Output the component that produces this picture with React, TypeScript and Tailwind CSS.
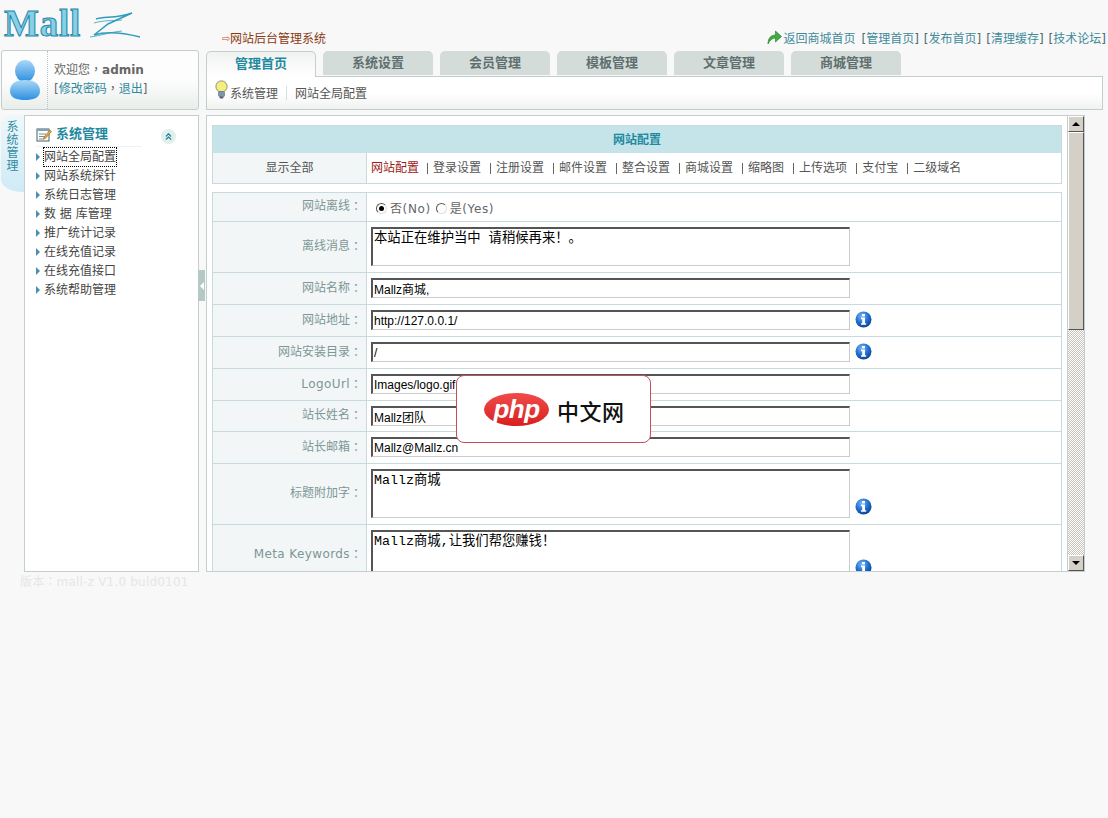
import { ChevronsUp } from 'lucide-react'

const cjk = 'font-["DejaVu_Sans","Noto_Sans_CJK_SC",sans-serif]'

const tabs = ['管理首页', '系统设置', '会员管理', '模板管理', '文章管理', '商城管理']
const menu = ['网站全局配置', '网站系统探针', '系统日志管理', '数 据 库管理', '推广统计记录', '在线充值记录', '在线充值接口', '系统帮助管理']
const sections = ['网站配置', '登录设置', '注册设置', '邮件设置', '整合设置', '商城设置', '缩略图', '上传选项', '支付宝', '二级域名']
const topLinks = ['管理首页', '发布首页', '清理缓存', '技术论坛']

// the TC face centres its punctuation, like the reference
function P({ c }: { c: string }) {
  return <span className="font-['Noto_Sans_CJK_TC',sans-serif] leading-none">{c}</span>
}

function InfoIcon() {
  return (
    <svg width="17" height="17" viewBox="0 0 17 17" className="shrink-0">
      <defs>
        <radialGradient id="inf" cx="40%" cy="30%" r="75%">
          <stop offset="0" stopColor="#7db8f0" />
          <stop offset="0.55" stopColor="#1f6fd0" />
          <stop offset="1" stopColor="#0b3f8c" />
        </radialGradient>
      </defs>
      <circle cx="8.5" cy="8.5" r="8" fill="url(#inf)" />
      <rect x="7" y="3" width="3" height="2.4" fill="#fff" />
      <path d="M6 6.6h4v5.6h1.2v1.6H6v-1.6h1.2V8.2H6z" fill="#fff" />
    </svg>
  )
}

function Bulb() {
  return (
    <svg width="13" height="20" viewBox="0 0 13 20">
      <circle cx="6.5" cy="6.5" r="5.6" fill="#f6ee7a" stroke="#8a8f7a" strokeWidth="1" />
      <rect x="3.5" y="11.5" width="6" height="5" rx="1" fill="#7c94b0" stroke="#58677a" strokeWidth="0.6" />
      <rect x="4.5" y="16.5" width="4" height="2" rx="1" fill="#56616e" />
    </svg>
  )
}

function Row({ label, h, latin, children }: { label: string; h: string; latin?: boolean; children: React.ReactNode }) {
  return (
    <div className={`flex shrink-0 border-b border-[#c8d9e0] ${h}`}>
      <div className="flex w-[154px] shrink-0 items-center justify-end border-r border-[#c8d9e0] bg-[#f2f6f6] pr-[4px] pb-[2px] text-[12px] text-[#7d9797]">
        <span className={latin ? 'tracking-[0.4px]' : ''}>{label}</span>
        <P c="：" />
      </div>
      <div className="flex min-w-0 flex-1 items-center bg-white pl-[4px]">{children}</div>
    </div>
  )
}

function Field({ value, info }: { value: string; info?: boolean }) {
  return (
    <>
      <input
        readOnly
        value={value}
        className="mb-[1px] h-[20px] w-[479px] border-t-2 border-r border-b border-l-2 border-t-[#555] border-r-[#ccc] border-b-[#ccc] border-l-[#555] bg-white px-[1px] font-['Liberation_Sans','Noto_Sans_CJK_SC',sans-serif] text-[12px] text-black outline-none"
      />
      {info && <span className="mb-[2px] ml-[5px]"><InfoIcon /></span>}
    </>
  )
}

function Area({ value, h }: { value: string; h: string }) {
  return (
    <textarea
      readOnly
      value={value}
      className={`${h} mb-[1px] w-[479px] resize-none overflow-hidden border-t-2 border-r border-b border-l-2 border-t-[#555] border-r-[#ccc] border-b-[#ccc] border-l-[#555] bg-white pt-[2px] pl-[1px] font-['Liberation_Mono','Noto_Sans_CJK_SC',monospace] text-[13.33px] leading-[15px] text-black outline-none`}
    />
  )
}

export default function App() {
  return (
    <div className={`relative h-[818px] w-[1108px] overflow-hidden bg-[#f8f8f8] text-[12px] ${cjk}`}>
      <header className="relative flex h-[50px] items-end">
        <div className="relative mb-[11px] ml-[4px] h-[31px] w-[218px]">
          <span className="font-['Liberation_Serif',serif] text-[37px] leading-[31px] font-bold tracking-[0.8px] text-[#86cfe6] [-webkit-text-stroke:1px_#1f86a8]">
            Mall
          </span>
          <svg width="56" height="30" viewBox="0 0 56 30" className="absolute top-[2px] left-[82px]" fill="none" stroke="#2f9dbd">
            <path d="M10 9 C18 6 30 9 46 3 L22 14 L8 25 C24 20 42 24 54 27" strokeWidth="1.5" />
            <path d="M4 27 C14 26 24 22 36 21" strokeWidth="0.8" />
            <path d="M8 13 C18 10 26 11 36 10" strokeWidth="0.8" />
          </svg>
        </div>
        <span className="mb-[2px] flex items-center text-[#8a3a12]">
          <span className="w-[8px] text-[10px] leading-none text-[#c7501a]">⇨</span>网站后台管理系统
        </span>
        <div className="mb-[2px] ml-auto flex items-center pr-[2px] text-[#3f8a9a]">
          <svg width="15" height="15" viewBox="0 0 15 15" className="mr-[1px] mb-[3px]">
            <path d="M1 14 C1 8 4 5 8.500 5 V1 L14.500 6.500 L8.500 12 V8 C5.500 8 3 10 1 14Z" fill="#3fae3f" stroke="#1f7a2f" strokeWidth="0.6" />
          </svg>
          <span className="mr-[1px]">返回商城首页</span>
          {topLinks.map((t) => (
            <span key={t} className="ml-[5px] text-[#4a6a70]">
              [<span className="text-[#3f8a9a]">{t}</span>]
            </span>
          ))}
        </div>
      </header>

      <div className="flex gap-[7px] pl-[1px]">
        <aside className="w-[198px] shrink-0">
          <div className="flex h-[60px] rounded-[3px] border border-[#c3cfcf] bg-gradient-to-b from-[#fdfdfd] from-50% to-[#e9eeea]">
            <div className="flex w-[46px] shrink-0 items-center justify-center border-r border-dotted border-[#b8c4c4]">
              <svg width="32" height="42" viewBox="0 0 32 42">
                <defs>
                  <linearGradient id="usr" x1="0" y1="0" x2="0" y2="1">
                    <stop offset="0" stopColor="#a9d8f8" />
                    <stop offset="1" stopColor="#2d8fe0" />
                  </linearGradient>
                </defs>
                <ellipse cx="16" cy="12" rx="10" ry="11" fill="url(#usr)" />
                <path d="M1 32 C1 24 8 21 16 21 C24 21 31 24 31 32 C31 39 24 41 16 41 C8 41 1 39 1 32Z" fill="url(#usr)" />
              </svg>
            </div>
            <div className="pt-[10px] pl-[6px] leading-[19px] text-[#666]">
              <div>欢迎您<P c="，" /><b className="text-[#666]">admin</b></div>
              <div>[<span className="text-[#2f8a9f]">修改密码</span><P c="，" /><span className="text-[#2f8a9f]">退出</span>]</div>
            </div>
          </div>

          <div className="relative mt-[5px] flex h-[457px]">
            <div className="h-[77px] w-[23px] shrink-0 rounded-tl-[8px] rounded-bl-[22px_12px] bg-gradient-to-b from-[#eef8fb] to-[#cfeaf6] pt-[6px] text-center text-[12px] leading-[13px] text-[#2f8a9f]">
              <div className="mx-auto w-[12px]">系统管理</div>
            </div>
            <div className="flex-1 border border-[#c3cfcf] bg-white pl-[11px]">
              <div className="relative flex h-[31px] w-[106px] items-center border-b border-[#eef2f2] pt-[5px]">
                <svg width="16" height="16" viewBox="0 0 16 16" className="shrink-0">
                  <rect x="1" y="3" width="12" height="12" fill="#fff" stroke="#44606a" />
                  <path d="M1 3h12v2H1z" fill="#7fa4b4" />
                  <path d="M3 8h7M3 10.500h6M3 13h5" stroke="#7c8c94" />
                  <path d="M8 11 L14 4 L15.500 5.500 L9.500 12.500 L7.500 13Z" fill="#e8a33a" stroke="#8a5a1a" strokeWidth="0.5" />
                </svg>
                <b className="ml-[4px] text-[13px] text-[#1f8a9f]">系统管理</b>
                <span className="absolute top-[13px] left-[125px] flex h-[15px] w-[15px] items-center justify-center rounded-full bg-[#dff0ee]">
                  <ChevronsUp size={11} strokeWidth={2.5} color="#1f7a8a" />
                </span>
              </div>
              <ul>
                {menu.map((m, i) => (
                  <li key={m} className="flex h-[19px] items-center text-[#444]">
                    <span className="mr-[4px] h-0 w-0 border-y-[4px] border-l-[4px] border-y-transparent border-l-[#4a90b0]" />
                    <span className={i === 0 ? 'outline-1 outline-black outline-dotted' : ''}>{m}</span>
                  </li>
                ))}
              </ul>
            </div>
            <div className="absolute top-[155px] right-[-6px] flex h-[31px] w-[7px] items-center justify-center bg-[#b4c8c4]">
              <span className="h-0 w-0 border-y-[4px] border-r-[4px] border-y-transparent border-r-white" />
            </div>
          </div>
          <div className="mt-[3px] pl-[19px] text-[12px] leading-[15px] tracking-[0.2px] text-[#e6e6e6]">版本<P c="：" />mall-z V1.0 buld0101</div>
        </aside>

        <main className="w-[897px] shrink-0">
          <div className="relative z-10 mt-[1px] flex gap-[7px]">
            {tabs.map((t, i) => (
              <div
                key={t}
                className={
                  i === 0
                    ? 'flex h-[26px] w-[110px] justify-center rounded-t-[5px] border border-b-0 border-[#c3cfcf] bg-gradient-to-b from-[#f0f2f0] to-white pt-[2px] text-[13px] font-bold text-[#1f8a9f]'
                    : 'flex h-[24px] w-[110px] justify-center rounded-t-[5px] bg-[#d3dcd9] pt-[2px] text-[13px] font-bold text-[#5f6f6f]'
                }
              >
                {t}
              </div>
            ))}
          </div>
          <div className="-mt-px flex h-[34px] items-center border border-[#c3cfcf] bg-gradient-to-b from-white from-50% to-[#f0f2f0] pl-[8px] text-[#555]">
            <span className="mb-[6px]"><Bulb /></span>
            <span className="mt-[2px] ml-[2px]">系统管理</span>
            <span className="mx-[8px] h-[14px] w-px bg-[#d8dede]" />
            <span className="mt-[2px]">网站全局配置</span>
          </div>

          <div className="mt-[5px] flex h-[457px] w-[879px] border border-[#c3cfcf] bg-white">
            <div className="min-w-0 flex-1 overflow-hidden border-r border-[#c3cfcf] pt-[9px] pl-[5px]">
              <div className="w-[850px] border border-[#c8d9e0]">
                <div className="flex h-[27px] items-center justify-center bg-[#c4e4ea] font-bold text-[#1f8a9f]">网站配置</div>
                <div className="flex h-[30px] items-center">
                  <div className="flex h-full w-[154px] items-center justify-center border-r border-[#c8d9e0] bg-[#f2f6f6] text-[#555]">显示全部</div>
                  <div className="flex items-center pl-[4px] text-[#555]">
                    {sections.map((s, i) => (
                      <span key={s} className="flex items-center">
                        {i > 0 && <span className={i > 1 ? 'mr-[5px] ml-[9px] h-[11px] w-px bg-[#666]' : 'mr-[5px] ml-[8px] h-[11px] w-px bg-[#666]'} />}
                        <span className={i === 0 ? 'text-[#a01818]' : ''}>{s}</span>
                      </span>
                    ))}
                  </div>
                </div>
              </div>

              <div className="mt-[8px] flex w-[850px] flex-col border-x border-t border-[#c8d9e0]">
                <Row label="网站离线" h="h-[29px]">
                  <span className="mt-[3px] ml-[5px] flex items-center text-[#666]">
                    <span className="flex h-[11px] w-[11px] items-center justify-center rounded-full border border-[#e0e0e0] border-t-[#555] border-l-[#555] bg-white">
                      <span className="h-[5px] w-[5px] rounded-full bg-black" />
                    </span>
                    <span className="ml-[3px] tracking-[0.6px]">否(No)</span>
                    <span className="ml-[5px] h-[11px] w-[11px] rounded-full border border-[#e0e0e0] border-t-[#555] border-l-[#555] bg-white" />
                    <span className="ml-[3px] tracking-[0.6px]">是(Yes)</span>
                  </span>
                </Row>
                <Row label="离线消息" h="h-[51px]"><Area value="本站正在维护当中 请稍候再来！。" h="h-[39px]" /></Row>
                <Row label="网站名称" h="h-[32px]"><Field value="Mallz商城," /></Row>
                <Row label="网站地址" h="h-[32px]"><Field value="http://127.0.0.1/" info /></Row>
                <Row label="网站安装目录" h="h-[32px]"><Field value="/" info /></Row>
                <Row label="LogoUrl" h="h-[32px]" latin><Field value="Images/logo.gif" /></Row>
                <Row label="站长姓名" h="h-[31px]"><Field value="Mallz团队" /></Row>
                <Row label="站长邮箱" h="h-[32px]"><Field value="Mallz@Mallz.cn" /></Row>
                <Row label="标题附加字" h="h-[61px]">
                  <Area value="Mallz商城" h="h-[49px]" />
                  <span className="mt-[24px] ml-[5px]"><InfoIcon /></span>
                </Row>
                <Row label="Meta Keywords" h="h-[61px]" latin>
                  <Area value="Mallz商城,让我们帮您赚钱！" h="h-[49px]" />
                  <span className="mt-[24px] ml-[5px]"><InfoIcon /></span>
                </Row>
              </div>
            </div>
            <div className="flex w-[16px] shrink-0 flex-col bg-[repeating-conic-gradient(#c8c4bc_0_25%,#fff_0_50%)] bg-[length:2px_2px]">
              <div className="flex h-[16px] items-center justify-center border border-t-white border-r-[#555] border-b-[#555] border-l-white bg-[#d4d0c8]">
                <span className="h-0 w-0 border-x-[4px] border-b-[4px] border-x-transparent border-b-black" />
              </div>
              <div className="h-[198px] border border-t-white border-r-[#555] border-b-[#555] border-l-white bg-[#d4d0c8]" />
              <div className="mt-auto flex h-[16px] items-center justify-center border border-t-white border-r-[#555] border-b-[#555] border-l-white bg-[#d4d0c8]">
                <span className="h-0 w-0 border-x-[4px] border-t-[4px] border-x-transparent border-t-black" />
              </div>
            </div>
          </div>
        </main>
      </div>

      <div className="absolute top-[375px] left-[456px] flex h-[68px] w-[195px] items-center rounded-[8px] border border-[#c0505a] bg-white pl-[27px]">
        <span className="flex h-[33px] w-[65px] items-center justify-center rounded-[50%] bg-gradient-to-b from-[#f04a4a] to-[#d81e1e] font-['Liberation_Sans',sans-serif] text-[26px] leading-none font-bold tracking-[-0.5px] text-white italic">
          php
        </span>
        <span className="mt-[1px] ml-[8px] font-['Noto_Sans_CJK_SC',sans-serif] text-[22px] leading-none font-medium tracking-[0.5px] text-[#111]">中文网</span>
      </div>
    </div>
  )
}
